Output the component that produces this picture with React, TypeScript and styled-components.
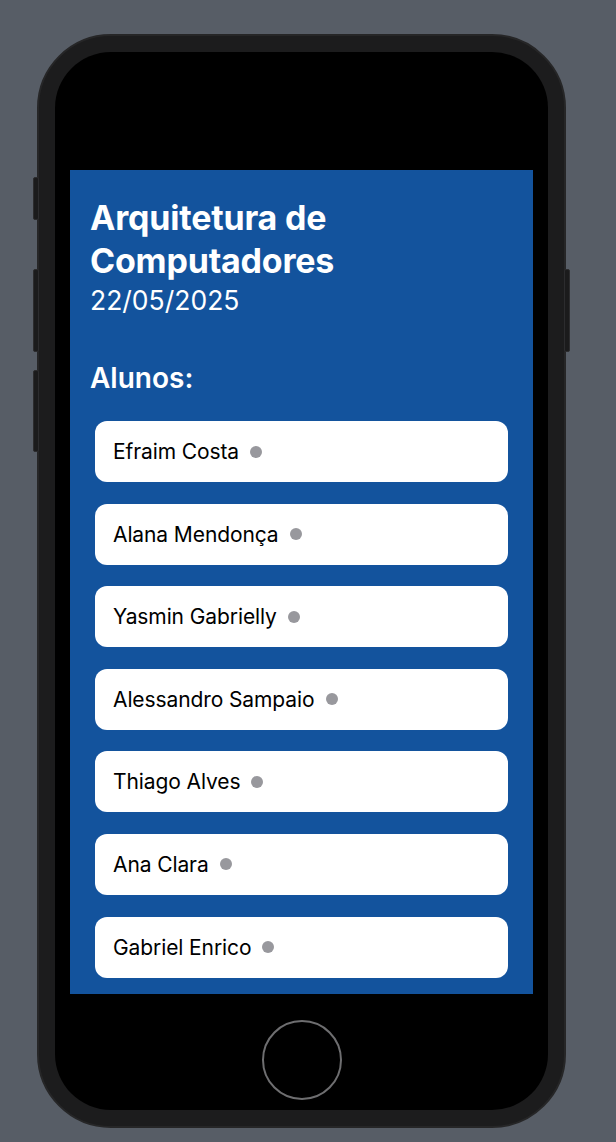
import styled, { createGlobalStyle } from 'styled-components';

const students = [
	'Efraim Costa',
	'Alana Mendonça',
	'Yasmin Gabrielly',
	'Alessandro Sampaio',
	'Thiago Alves',
	'Ana Clara',
	'Gabriel Enrico',
];

const GlobalStyle = createGlobalStyle`
	html,
	body {
		margin: 0;
		padding: 0;
		background: #575d66;
	}

	body {
		font-family: Inter, 'Noto Sans', 'Liberation Sans', sans-serif;
		-webkit-font-smoothing: antialiased;
	}
`;

const App = () => {
	return (
		<Page>
			<GlobalStyle />
			<Phone>
				<SideButton side="left" top={141} length={41} />
				<SideButton side="left" top={233} length={81} />
				<SideButton side="left" top={334} length={80} />
				<SideButton side="right" top={233} length={81} />
				<Bezel>
					<Screen>
						<Title>Arquitetura de Computadores</Title>
						<DateText>22/05/2025</DateText>
						<SectionTitle>Alunos:</SectionTitle>
						<List>
							{students.map((name) => (
								<Card key={name}>
									<Name>{name}</Name>
									<StatusDot />
								</Card>
							))}
						</List>
					</Screen>
					<Chin>
						<HomeButton />
					</Chin>
				</Bezel>
			</Phone>
		</Page>
	);
};

const Page = styled.div`
	width: 616px;
	height: 1142px;
	padding: 34px 0 0 37px;
	box-sizing: border-box;
	overflow: hidden;
`;

const Phone = styled.div`
	position: relative;

	width: 529px;
	height: 1094px;
	padding: 16px 16px;
	box-sizing: border-box;

	background: #1c1c1d;
	border: 2px solid #262627;
	border-radius: 74px;
`;

const SideButton = styled.div<{ side: 'left' | 'right'; top: number; length: number }>`
	position: absolute;
	top: ${(p) => p.top}px;
	${(p) => (p.side === 'left' ? 'left: -6px;' : 'right: -6px;')}

	width: 4px;
	height: ${(p) => p.length}px;

	background: #1b1b1c;
	border: 1px solid #2c2c2e;
	border-radius: 2px;
`;

const Bezel = styled.div`
	display: flex;
	flex-direction: column;

	height: 100%;
	padding: 118px 15px 0 15px;
	box-sizing: border-box;

	background: #000;
	border-radius: 56px;
	overflow: hidden;
`;

const Screen = styled.div`
	flex-shrink: 0;
	height: 824px;
	padding: 26px 20px 0 20px;
	box-sizing: border-box;

	background: #13539d;
	color: #fff;
	overflow: hidden;
`;

const Title = styled.h1`
	margin: 0;
	padding: 0;

	font-size: 34px;
	font-weight: 700;
	line-height: 43px;
	letter-spacing: -0.2px;
`;

const DateText = styled.p`
	margin: 0;
	padding: 0;

	font-size: 26.5px;
	font-weight: 400;
	line-height: 36px;
`;

const SectionTitle = styled.h2`
	margin: 43px 0 0 0;
	padding: 0;

	font-size: 28px;
	font-weight: 600;
	line-height: 34px;
`;

const List = styled.div`
	display: flex;
	flex-direction: column;
	gap: 21.6px;

	margin-top: 26px;
	padding: 0 5px;
`;

const Card = styled.div`
	display: flex;
	align-items: center;
	gap: 11px;

	height: 61px;
	padding: 0 18px;
	box-sizing: border-box;

	background: #fff;
	border-radius: 12px;
`;

const Name = styled.span`
	color: #000;
	font-size: 21px;
	font-weight: 400;
	letter-spacing: -0.1px;
`;

const StatusDot = styled.span`
	width: 12px;
	height: 12px;

	background: #98989d;
	border-radius: 50%;
`;

const Chin = styled.div`
	display: flex;
	flex: 1;
	align-items: center;
	justify-content: center;
	padding-top: 16px;
`;

const HomeButton = styled.div`
	width: 76px;
	height: 76px;

	border: 2px solid #6e6e70;
	border-radius: 50%;
`;

export default App;
